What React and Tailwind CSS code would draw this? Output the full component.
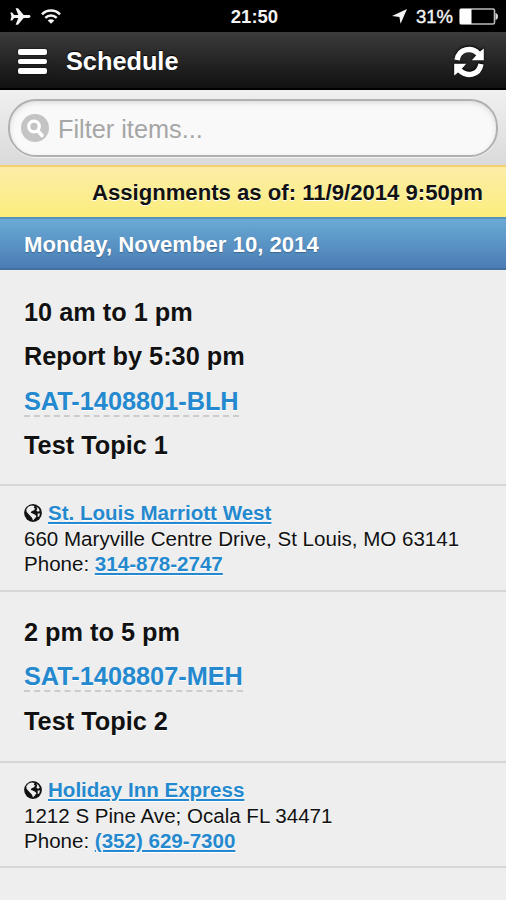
import { useState } from 'react';

const assignments = [
  {
    id: "SAT-1408801-BLH",
    time: "10 am to 1 pm",
    report: "Report by 5:30 pm",
    topic: "Test Topic 1",
    place: "St. Louis Marriott West",
    address: "660 Maryville Centre Drive, St Louis, MO 63141",
    phone: "314-878-2747",
    height: "h-[216px] pt-[20px]",
    placeHeight: "h-[106px]",
  },
  {
    id: "SAT-1408807-MEH",
    time: "2 pm to 5 pm",
    topic: "Test Topic 2",
    place: "Holiday Inn Express",
    address: "1212 S Pine Ave; Ocala FL 34471",
    phone: "(352) 629-7300",
    height: "h-[171px] pt-[18px]",
    placeHeight: "h-[105px]",
  },
];

const PlaneIcon = () => (
  <svg width="21" height="19" viewBox="0 0 21 19" fill="#f4f4f4">
    <path d="M20.500 9.500c0-.9-.9-1.400-2-1.400h-4.800L8 1.200H5.600L8.300 8.100H4.200L2.200 5.400H.4l1 4.100-1 4.100h1.800l2-2.700h4.100L5.600 17.800H8l5.700-6.900h4.800c1.100 0 2-.5 2-1.400z" />
  </svg>
);

const WifiIcon = () => (
  <svg width="20" height="15" viewBox="0 0 20 15" fill="none" stroke="#f4f4f4" strokeWidth="2.500">
    <path d="M1 5.300c5-5 13-5 18 0" />
    <path d="M4.300 8.900c3.200-3.200 8.200-3.200 11.400 0" />
    <path d="M10 14.800 6.700 11.500c1.900-1.800 4.700-1.800 6.600 0z" fill="#f4f4f4" stroke="none" />
  </svg>
);

const RefreshIcon = () => (
  <svg width="32" height="32" viewBox="0 0 32 32" className="drop-shadow-[0_-1px_1px_#000]">
    <g fill="none" stroke="#fff" strokeWidth="5.400">
      <path d="M4 14C6 2.500 18.500.8 25.500 7.800" />
      <path d="M28 18C26 29.500 13.500 31.200 6.500 24.200" />
    </g>
    <path fill="#fff" d="M30.800 2.600v11.600H18.800l4.200-4.800 4.600-4.400z" />
    <path fill="#fff" d="M1.200 29.400V17.800h12L9 22.600 4.400 27z" />
  </svg>
);

const GlobeIcon = () => (
  <svg width="18" height="18" viewBox="0 0 18 18" className="shrink-0">
    <circle cx="9" cy="9" r="8.900" fill="#111" />
    <path fill="#eee" d="M2.300 5.200 4.500 2.600 7.800 1.600l2.700.5-.7 1.700 1.500.9-1.700 1.800-2 .7-.9 1.600 2.500.9 2.300 1.300.9 1.500-1.800 2.200-1.600 1.900-1-2.800-2.100-2.200L4 9.600 2.600 7.800z" />
    <path fill="#eee" d="m12.400 2.600 2.500 2.200.8 2.200-1.900.7-1.500-1.200 1-1.500z" />
    <path fill="#eee" d="m13.700 9.400 2.300.1-.8 2.900-1.500.7z" />
  </svg>
);

const StatusBar = () => (
  <div className="h-8 bg-black text-[#f4f4f4] grid grid-cols-3 items-center pl-[10px] pr-[7px]">
    <div className="flex items-center gap-[10px]">
      <PlaneIcon />
      <WifiIcon />
    </div>
    <span className="text-center text-[18.500px] leading-8 font-bold pt-[1px]">21:50</span>
    <div className="flex items-center justify-end">
      <svg width="15" height="15" viewBox="0 0 15 15" fill="#f4f4f4" className="mr-[9px]">
        <path d="M15 0 8.600 14.800 7.400 8 0 7z" />
      </svg>
      <span className="text-[18.500px] leading-8 pt-[1px] mr-[6px] [-webkit-text-stroke:0.4px_#f4f4f4]">31%</span>
      <svg width="40" height="17" viewBox="0 0 40 17">
        <rect x="1" y="1" width="34.500" height="15" rx="1.500" fill="none" stroke="#bbb" strokeWidth="1.600" />
        <rect x="1" y="1" width="11.500" height="15" fill="#fff" />
        <path d="M37 5.500c2 .8 2 5.200 0 6z" fill="#ddd" stroke="#ddd" />
      </svg>
    </div>
  </div>
);

const Header = () => (
  <div className="h-[58px] flex items-center pl-[18px] pr-[21px] bg-linear-to-b from-[#3c3c3c] to-[#111] border-b-2 border-black text-white">
    <button className="flex flex-col gap-[4px] pt-[3px]">
      <span className="w-[29px] h-[5.500px] rounded-[2px] bg-white shadow-[0_0_2px_#000]"></span>
      <span className="w-[29px] h-[5.500px] rounded-[2px] bg-white shadow-[0_0_2px_#000]"></span>
      <span className="w-[29px] h-[5.500px] rounded-[2px] bg-white shadow-[0_0_2px_#000]"></span>
    </button>
    <h1 className="ml-[19px] pt-[4px] text-[25.300px] font-bold [text-shadow:0_-1px_1px_#000]">Schedule</h1>
    <button className="ml-auto pt-[3px]">
      <RefreshIcon />
    </button>
  </div>
);

const Location = ({ item }) => (
  <div className={`${item.placeHeight} pt-[14px] pl-[24px] border-b-2 border-[#d6d6d6] text-[20.550px] leading-[25.500px]`}>
    <div className="flex items-center">
      <GlobeIcon />
      <a href="#" className="ml-[6px] font-bold text-[#2489ce] underline decoration-[1.500px] underline-offset-[2px]">{item.place}</a>
    </div>
    <p>{item.address}</p>
    <p>
      Phone: <a href="#" className="font-bold text-[#2489ce] underline decoration-[1.500px] underline-offset-[2px]">{item.phone}</a>
    </p>
  </div>
);

const App = () => {
  const [filter, setFilter] = useState("");
  const visible = assignments.filter((a) => JSON.stringify(a).toLowerCase().includes(filter.toLowerCase()));

  return (
    <div className="min-h-screen bg-[#eee] text-[#111] font-['Liberation_Sans',Arial,sans-serif] [text-shadow:0_1px_0_#fff]">
      <div className="[text-shadow:none]">
        <StatusBar />
        <Header />
      </div>
      <div className="h-[75px] pt-[9px] px-2 bg-linear-to-b from-[#f0f0f0] to-[#dadada]">
        <div className="h-[58px] flex items-center gap-[9px] pl-[11px] rounded-[28px] border-2 border-[#b0b0b0] bg-[#f9f9f9] shadow-[inset_0_2px_5px_#ddd,0_1px_0_#f4f4f4]">
          <svg width="28" height="28" viewBox="0 0 28 28" className="shrink-0">
            <circle cx="14" cy="14" r="14" fill="#c4c4c4" />
            <circle cx="13" cy="12.500" r="5.300" fill="none" stroke="#fff" strokeWidth="3.200" />
            <path d="m17 17 4 4.500" stroke="#fff" strokeWidth="3.600" strokeLinecap="round" />
          </svg>
          <input
            type="text"
            placeholder="Filter items..."
            value={filter}
            onChange={(e) => setFilter(e.target.value)}
            className="w-full pt-[3px] text-[25.300px] placeholder:text-[#a6a6a6] outline-none [text-shadow:none]"
          />
        </div>
      </div>
      <div className="h-[52px] flex items-center justify-end pt-[2px] pr-[23px] border-t-2 border-[#f3cf6e] bg-linear-to-b from-[#fceda7] to-[#fbee7c] text-[22.140px] font-bold">
        Assignments as of: 11/9/2014 9:50pm
      </div>
      <div className="h-[53px] flex items-center pt-[2px] pl-[24px] border-y-2 border-t-[#5592b8] border-b-[#456f9c] bg-linear-to-b from-[#6aaad5] to-[#4a7db4] text-white text-[22.140px] font-bold [text-shadow:0_1px_1px_#3e6790]">
        Monday, November 10, 2014
      </div>
      {visible.map((item) => (
        <div key={item.id}>
          <div className={`${item.height} pl-[24px] border-b-2 border-[#d6d6d6] text-[25.300px] leading-[44.300px] font-bold`}>
            <p>{item.time}</p>
            {item.report && <p>{item.report}</p>}
            <p className="flex h-[44.300px] items-center">
              <a href="#" className="h-[32px] leading-[32px] border-b-2 border-dashed border-[#ccc] text-[#2489ce]">{item.id}</a>
            </p>
            <p>{item.topic}</p>
          </div>
          <Location item={item} />
        </div>
      ))}
    </div>
  );
};

export default App;
